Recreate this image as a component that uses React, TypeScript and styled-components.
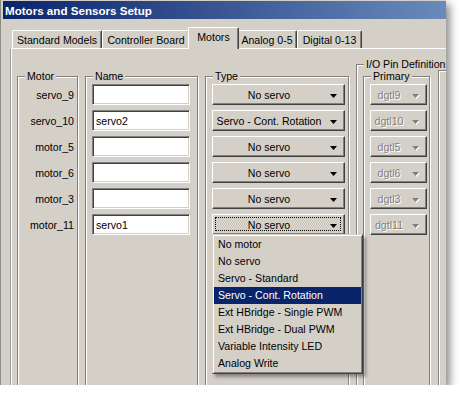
import styled, { createGlobalStyle } from 'styled-components';

const GlobalStyle = createGlobalStyle`
  html, body {
    margin: 0;
    background: #fff;
  }

  body {
    font-family: "Liberation Sans", Arial, sans-serif;
    font-size: 10.6px;
    color: #000;
  }
`;

const tabs = [
  { label: 'Standard Models', width: 90 },
  { label: 'Controller Board', width: 88 },
  { label: 'Motors', width: 47, active: true },
  { label: 'Analog 0-5', width: 60 },
  { label: 'Digital 0-13', width: 65 },
];

const rows = [
  { motor: 'servo_9', name: '', type: 'No servo', pin: 'dgtl9' },
  { motor: 'servo_10', name: 'servo2', type: 'Servo - Cont. Rotation', pin: 'dgtl10' },
  { motor: 'motor_5', name: '', type: 'No servo', pin: 'dgtl5' },
  { motor: 'motor_6', name: '', type: 'No servo', pin: 'dgtl6' },
  { motor: 'motor_3', name: '', type: 'No servo', pin: 'dgtl3' },
  { motor: 'motor_11', name: 'servo1', type: 'No servo', pin: 'dgtl11', open: true },
];

const options = [
  'No motor',
  'No servo',
  'Servo - Standard',
  'Servo - Cont. Rotation',
  'Ext HBridge - Single PWM',
  'Ext HBridge - Dual PWM',
  'Variable Intensity LED',
  'Analog Write',
];

function Arrow({ disabled }: { disabled?: boolean }) {
  return (
    <ArrowBox $disabled={disabled}>
      <svg width="7" height="4" viewBox="0 0 7 4">
        <path d="M0 0h7L3.5 4z" fill="currentColor" />
      </svg>
    </ArrowBox>
  );
}

function App() {
  return (
    <>
      <GlobalStyle />
      <Window>
        <TitleBar>Motors and Sensors Setup</TitleBar>
        <TabStrip>
          {tabs.map((tab) => (
            <Tab key={tab.label} $width={tab.width} $active={tab.active}>
              {tab.label}
            </Tab>
          ))}
        </TabStrip>
        <Panel>
          <Group $width={61} $height={330} $mt={12}>
            <Legend>Motor</Legend>
            <Column>
              {rows.map((row) => (
                <MotorLabel key={row.motor}>{row.motor}</MotorLabel>
              ))}
            </Column>
          </Group>

          <Group $width={113} $height={330} $mt={12}>
            <Legend>Name</Legend>
            <Column>
              {rows.map((row) => (
                <TextBox key={row.motor} value={row.name} readOnly />
              ))}
            </Column>
          </Group>

          <Group $width={144} $height={330} $mt={12}>
            <Legend>Type</Legend>
            <Column>
              {rows.map((row) => (
                <Combo key={row.motor} $width={133} $focused={row.open}>
                  <ComboText>{row.type}</ComboText>
                  <Arrow />
                  {row.open && (
                    <DropList>
                      {options.map((option) => (
                        <DropItem key={option} $selected={option === 'Servo - Cont. Rotation'}>
                          {option}
                        </DropItem>
                      ))}
                    </DropList>
                  )}
                </Combo>
              ))}
            </Column>
          </Group>

          <OuterGroup $width={300} $height={340} $mt={0}>
            <Legend>I/O Pin Definition</Legend>
            <Group $width={67} $height={330} $mt={0}>
              <Legend>Primary</Legend>
              <Column>
                {rows.map((row) => (
                  <Combo key={row.pin} $width={57}>
                    <ComboText $disabled>{row.pin}</ComboText>
                    <Arrow disabled />
                  </Combo>
                ))}
              </Column>
            </Group>
            <Group $width={120} $height={330} $mt={0} />
          </OuterGroup>
        </Panel>
      </Window>
    </>
  );
}

export default App;

const Window = styled.div`
  box-sizing: border-box;
  width: 446px;
  height: 385px;
  overflow: hidden;

  display: flex;
  flex-direction: column;

  border-left: 1px solid #8c8c8c;
  background-color: #d4d0c8;
  box-shadow: 4px 4px 8px rgba(0, 0, 0, 0.45);
`;

const TitleBar = styled.div`
  flex: none;
  height: 18px;
  margin: 1px 0 0 2px;
  padding-left: 2px;

  display: flex;
  align-items: center;

  background: linear-gradient(90deg, #0a246a 0, #a6caf0 720px);
  color: #fff;
  font-size: 11.6px;
  font-weight: bold;
  white-space: nowrap;
`;

const TabStrip = styled.div`
  flex: none;
  height: 21px;
  margin-top: 8px;
  padding-left: 11px;

  display: flex;
  align-items: flex-end;
`;

const Tab = styled.div<{ $width: number; $active?: boolean }>`
  box-sizing: border-box;
  flex: none;
  position: relative;
  z-index: ${(p) => (p.$active ? 1 : 0)};
  width: ${(p) => p.$width + (p.$active ? 4 : 0)}px;
  height: ${(p) => (p.$active ? 22 : 18)}px;
  margin: 0 ${(p) => (p.$active ? -2 : 0)}px ${(p) => (p.$active ? -1 : 0)}px;
  padding-bottom: ${(p) => (p.$active ? 3 : 0)}px;

  display: flex;
  align-items: center;
  justify-content: center;

  border-top: 1px solid #fff;
  border-left: 1px solid #fff;
  border-right: 1px solid #404040;
  border-radius: 2px 2px 0 0;
  box-shadow: inset -1px 0 0 #808080;
  background-color: #d4d0c8;
  white-space: nowrap;
`;

const Panel = styled.div`
  flex: none;
  width: 600px;
  height: 400px;
  margin-left: 9px;
  padding: 9px 0 0 6px;

  display: flex;
  align-items: flex-start;
  gap: 7px;

  border-top: 1px solid #fff;
  border-left: 1px solid #9a9a9a;
  box-shadow: inset 1px 0 0 #fff;
`;

const Group = styled.fieldset<{ $width: number; $height: number; $mt: number }>`
  box-sizing: border-box;
  flex: none;
  width: ${(p) => p.$width}px;
  height: ${(p) => p.$height}px;
  min-width: 0;
  margin: ${(p) => p.$mt}px 0 0;
  padding: 2px 0 0 6px;

  border: 1px solid #808080;
  box-shadow: inset 1px 1px 0 #fff, 1px 1px 0 #fff;
`;

const OuterGroup = styled(Group)`
  padding-top: 0;

  display: flex;
  align-items: flex-start;
  gap: 8px;
`;

const Legend = styled.legend`
  margin-left: 1px;
  padding: 0 2px;
  line-height: 12px;

  background-color: #d4d0c8;
  white-space: nowrap;
`;

const Column = styled.div`
  display: flex;
  flex-direction: column;
  gap: 5px;
`;

const MotorLabel = styled.div`
  height: 21px;
  padding-right: 3px;

  display: flex;
  align-items: center;
  justify-content: flex-end;
`;

const TextBox = styled.input`
  box-sizing: border-box;
  width: 98px;
  height: 21px;
  margin: 0;
  padding: 0 0 0 3px;

  border: 1px solid;
  border-color: #808080 #fff #fff #808080;
  box-shadow: inset 1px 1px 0 #404040, inset -1px -1px 0 #d4d0c8;
  background-color: #fff;
  outline: none;
  font: inherit;
  color: #000;
`;

const Combo = styled.div<{ $width: number; $focused?: boolean }>`
  box-sizing: border-box;
  position: relative;
  width: ${(p) => p.$width}px;
  height: 21px;

  display: flex;
  align-items: center;

  border: 1px solid;
  border-color: #fff #404040 #404040 #fff;
  box-shadow: inset -1px -1px 0 #808080;
  background-color: #d4d0c8;

  &::after {
    content: '';
    display: ${(p) => (p.$focused ? 'block' : 'none')};
    position: absolute;
    inset: 2px 3px 3px 2px;
    border: 1px dotted #000;
  }
`;

const ComboText = styled.div<{ $disabled?: boolean }>`
  flex: 1;
  text-align: center;
  white-space: nowrap;
  color: ${(p) => (p.$disabled ? '#808080' : '#000')};
  text-shadow: ${(p) => (p.$disabled ? '1px 1px 0 #fff' : 'none')};
`;

const ArrowBox = styled.div<{ $disabled?: boolean }>`
  flex: none;
  width: 16px;
  margin-right: 3px;

  display: flex;
  justify-content: center;
  padding-top: 2px;

  color: ${(p) => (p.$disabled ? '#808080' : '#000')};
  filter: ${(p) => (p.$disabled ? 'drop-shadow(1px 1px 0 #fff)' : 'none')};
`;

const DropList = styled.div`
  box-sizing: border-box;
  position: absolute;
  z-index: 10;
  top: 100%;
  left: -1px;
  width: 151px;
  padding: 1px;

  border: 1px solid;
  border-color: #d4d0c8 #404040 #404040 #d4d0c8;
  box-shadow: inset 1px 1px 0 #fff, inset -1px -1px 0 #808080, 3px 3px 3px rgba(0, 0, 0, 0.35);
  background-color: #d4d0c8;
`;

const DropItem = styled.div<{ $selected?: boolean }>`
  height: 17px;
  padding-left: 4px;

  line-height: 17px;
  white-space: nowrap;

  background-color: ${(p) => (p.$selected ? '#0a246a' : 'transparent')};
  color: ${(p) => (p.$selected ? '#fff' : '#000')};
`;
